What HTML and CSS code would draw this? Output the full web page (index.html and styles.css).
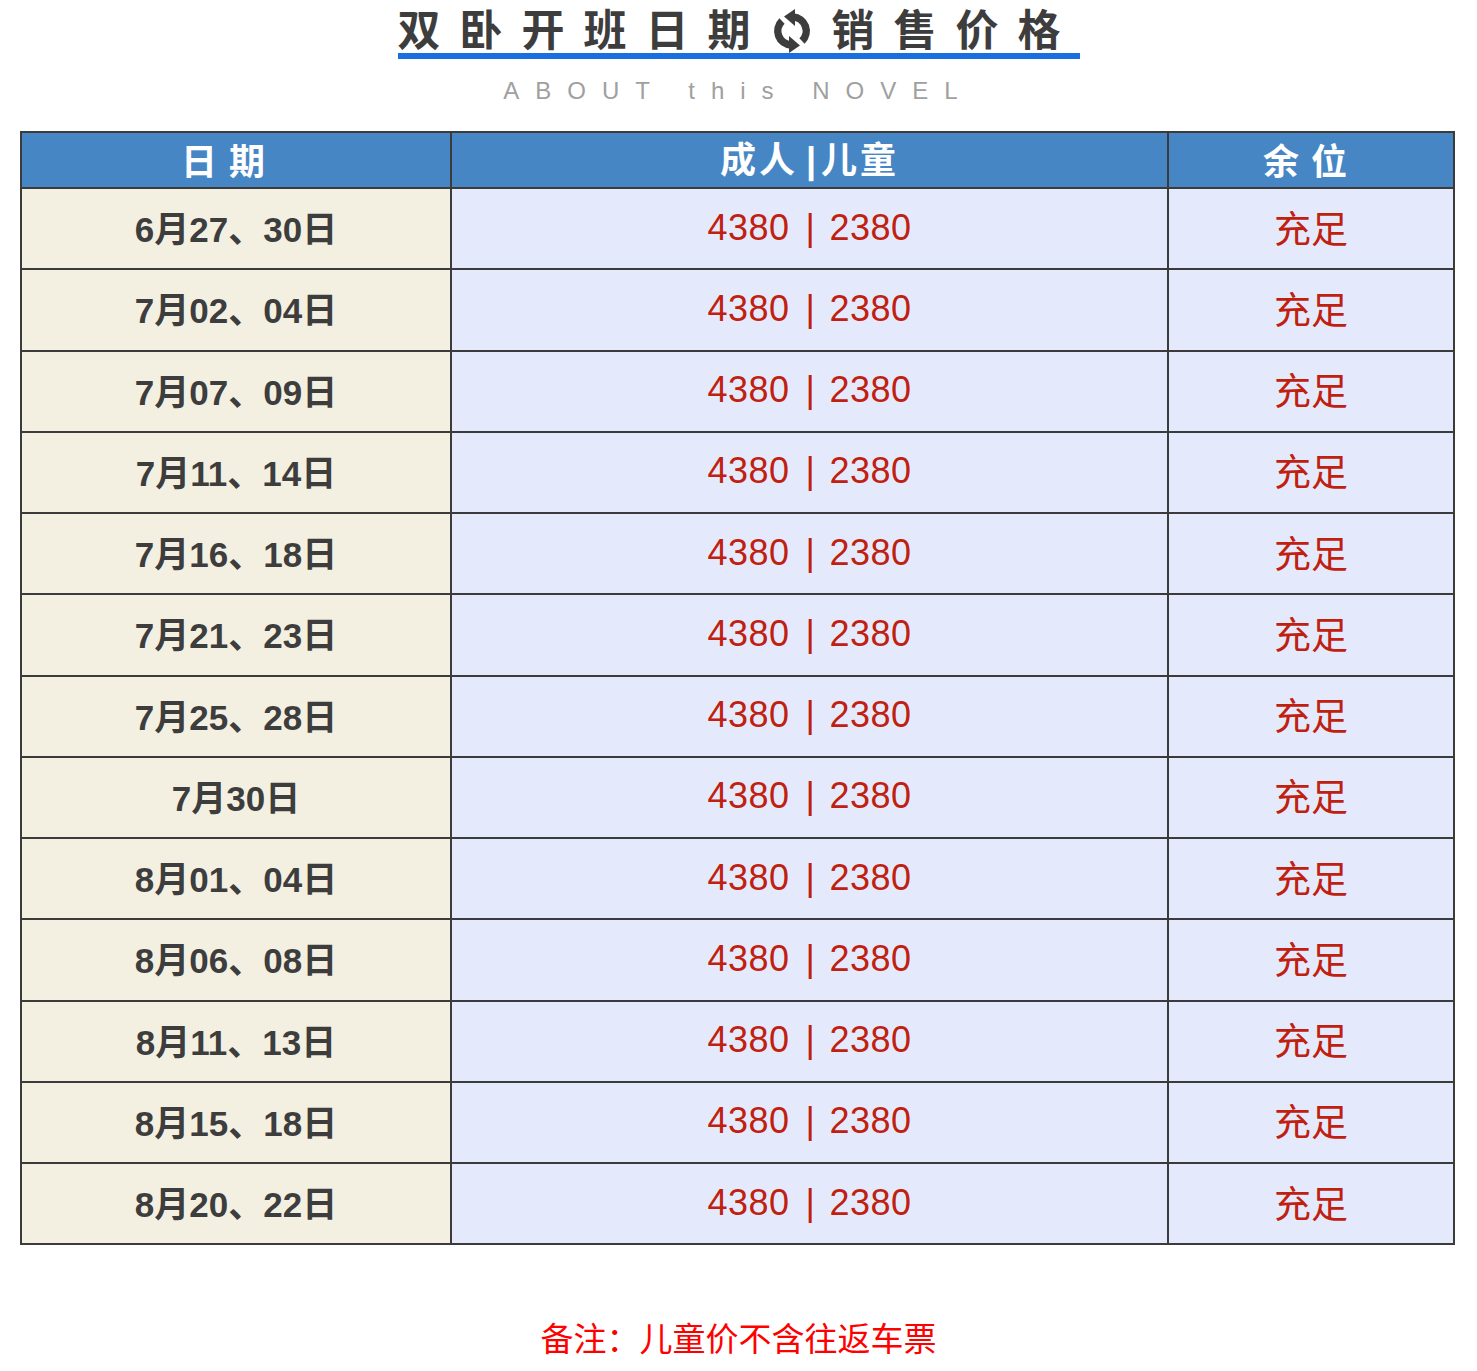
FILE: index.html
```html
<!DOCTYPE html>
<html lang="zh">
<head>
<meta charset="utf-8">
<title>双卧开班日期销售价格</title>
<link rel="stylesheet" href="styles.css">
</head>
<body>
<div class="page">
  <header class="head">
    <h1 class="title"><span class="tline">双卧开班日期<svg class="sync" viewBox="0 0 40 44" width="40" height="44" aria-hidden="true"><path d="M10 12 A14 14 0 0 0 19 36" fill="none" stroke="#3d3d3d" stroke-width="7.5"/><polygon points="17,27 28,36.5 17,44" fill="#3d3d3d"/><path d="M30 32 A14 14 0 0 0 21 8" fill="none" stroke="#3d3d3d" stroke-width="7.5"/><polygon points="23,0 12,7.5 23,17" fill="#3d3d3d"/></svg>销售价格</span></h1>
    <p class="sub">ABOUT this NOVEL</p>
  </header>
  <table class="tbl">
    <colgroup><col class="c1"><col class="c2"><col class="c3"></colgroup>
    <thead>
      <tr><th><span class="sp sp1">日期</span></th><th><span class="sp2">成人<span class="hbar">|</span>儿童</span></th><th><span class="sp">余位</span></th></tr>
    </thead>
    <tbody>
      <tr><td class="d">6月27、30日</td><td class="p">4380<span class="bar">|</span>2380</td><td class="s">充足</td></tr>
      <tr><td class="d">7月02、04日</td><td class="p">4380<span class="bar">|</span>2380</td><td class="s">充足</td></tr>
      <tr><td class="d">7月07、09日</td><td class="p">4380<span class="bar">|</span>2380</td><td class="s">充足</td></tr>
      <tr><td class="d">7月11、14日</td><td class="p">4380<span class="bar">|</span>2380</td><td class="s">充足</td></tr>
      <tr><td class="d">7月16、18日</td><td class="p">4380<span class="bar">|</span>2380</td><td class="s">充足</td></tr>
      <tr><td class="d">7月21、23日</td><td class="p">4380<span class="bar">|</span>2380</td><td class="s">充足</td></tr>
      <tr><td class="d">7月25、28日</td><td class="p">4380<span class="bar">|</span>2380</td><td class="s">充足</td></tr>
      <tr><td class="d">7月30日</td><td class="p">4380<span class="bar">|</span>2380</td><td class="s">充足</td></tr>
      <tr><td class="d">8月01、04日</td><td class="p">4380<span class="bar">|</span>2380</td><td class="s">充足</td></tr>
      <tr><td class="d">8月06、08日</td><td class="p">4380<span class="bar">|</span>2380</td><td class="s">充足</td></tr>
      <tr><td class="d">8月11、13日</td><td class="p">4380<span class="bar">|</span>2380</td><td class="s">充足</td></tr>
      <tr><td class="d">8月15、18日</td><td class="p">4380<span class="bar">|</span>2380</td><td class="s">充足</td></tr>
      <tr><td class="d">8月20、22日</td><td class="p">4380<span class="bar">|</span>2380</td><td class="s">充足</td></tr>
    </tbody>
  </table>
  <p class="note">备注：儿童价不含往返车票</p>
</div>
</body>
</html>
```
FILE: styles.css
```css
html, body {
  margin: 0;
  padding: 0;
  background: #ffffff;
}
.page {
  width: 1477px;
  font-family: "Liberation Sans", "Noto Sans CJK SC", sans-serif;
}
.head {
  text-align: center;
  padding-top: 2px;
}
.title {
  margin: 0;
  font-family: "Noto Sans CJK SC", sans-serif;
  font-size: 43px;
  font-weight: 700;
  color: #3d3d3d;
  line-height: 51px;
  letter-spacing: 19px;
}
.tline {
  display: inline-block;
  border-bottom: 6px solid #1a6fe0;
  line-height: 51px;
}
.sync {
  display: inline-block;
  vertical-align: -7px;
  margin: 0 20px 0 2px;
}
.sub {
  margin: 18px 0 0 0;
  font-family: "Liberation Sans", sans-serif;
  font-size: 24px;
  color: #a0a0a0;
  letter-spacing: 16px;
  line-height: 28px;
}
.tbl {
  margin: 26px 0 0 20px;
  width: 1433px;
  border-collapse: collapse;
  table-layout: fixed;
}
.c1 { width: 430px; }
.c2 { width: 717px; }
.c3 { width: 286px; }
.tbl th, .tbl td {
  border: 2px solid #3b3b3b;
  text-align: center;
  padding: 0;
}
.tbl th {
  background: #4686c4;
  color: #ffffff;
  font-family: "Noto Sans CJK SC", sans-serif;
  font-weight: 700;
  font-size: 36px;
  height: 49px;
  line-height: 48px;
  padding-bottom: 2px;
}
.sp { letter-spacing: 12px; }
.sp1 { padding-right: 14px; }
.sp2 { letter-spacing: 3px; }
.hbar {
  font-family: "Liberation Sans", sans-serif;
  margin: 0 2px 0 8px;
}
.tbl td {
  height: 75.25px;
  padding-bottom: 4px;
}
.d {
  background: #f4f0e1;
  color: #3d3d3d;
  font-weight: 700;
  font-size: 35px;
}
.p, .s {
  background: #e4eafc;
  color: #c0200f;
}
.tbl td.p {
  font-size: 36px;
  letter-spacing: 0.5px;
  height: 77.25px;
  padding-bottom: 2px;
}
.bar {
  display: inline-block;
  margin: 0 14px 0 16px;
}
.s {
  font-family: "Noto Sans CJK SC", sans-serif;
  font-size: 37px;
}
.note {
  margin: 68px 0 0 0;
  text-align: center;
  font-family: "Noto Sans CJK SC", sans-serif;
  font-size: 33px;
  color: #ff0000;
  line-height: 48px;
}
```
